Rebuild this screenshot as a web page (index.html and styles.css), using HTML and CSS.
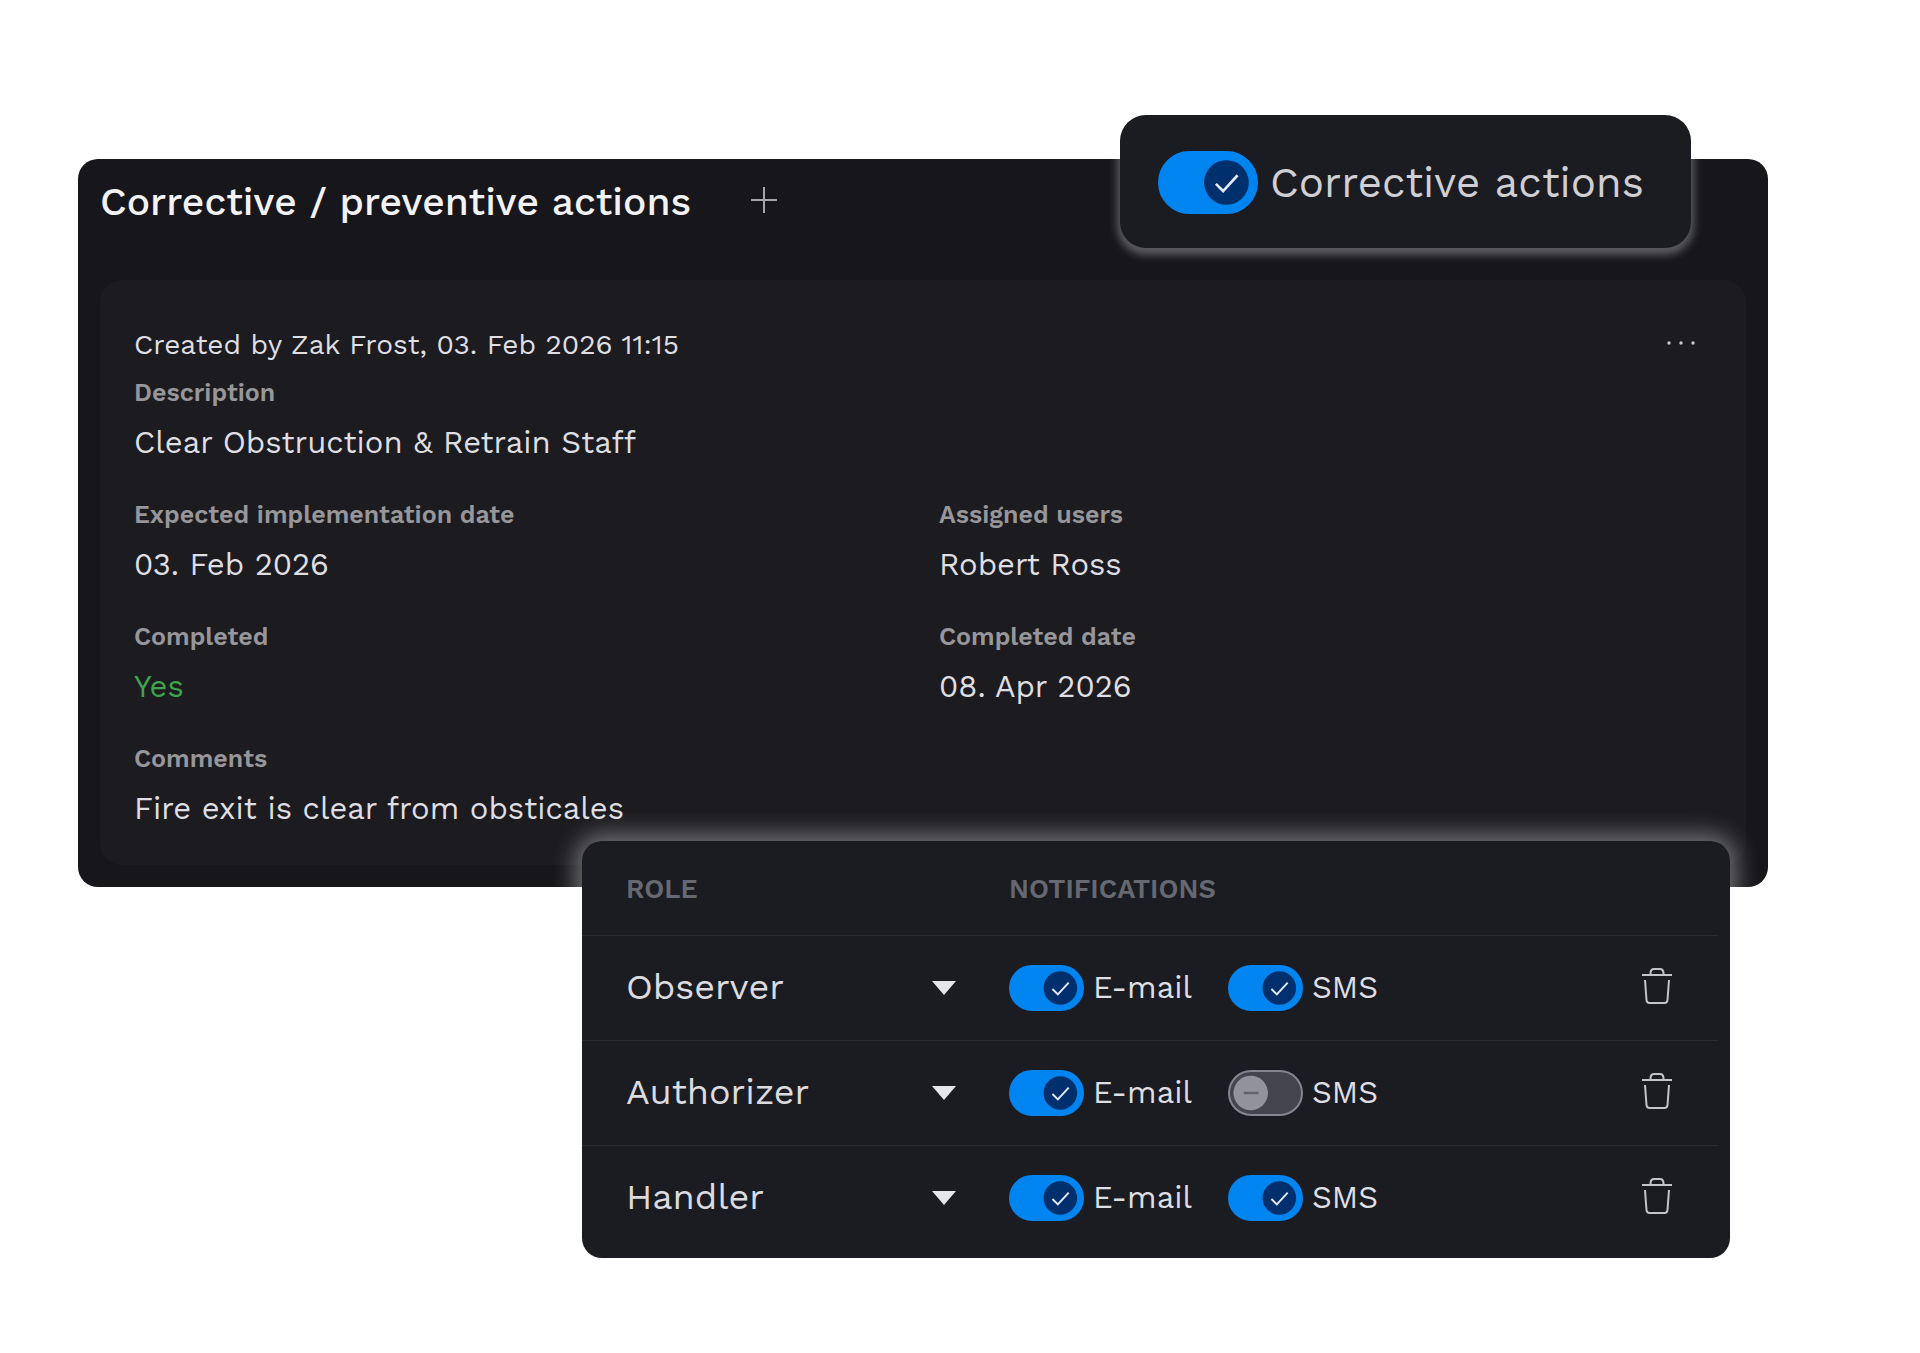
FILE: index.html
```html
<!DOCTYPE html>
<html lang="en">
<head>
  <meta charset="UTF-8">
  <title>Corrective / preventive actions</title>
  <meta name="viewport" content="width=device-width, initial-scale=1">
  <link rel="stylesheet" href="styles.css">
</head>
<body>
  <svg class="sprite" aria-hidden="true">
    <symbol id="thumb-on" viewBox="0 0 76 46">
      <circle cx="52" cy="23" r="17" fill="#002f6d"/>
      <path d="M44 24l5.500 5.500L60.500 17.500" fill="none" stroke="#e3e8f5" stroke-width="2"/>
    </symbol>
    <symbol id="thumb-off" viewBox="0 0 76 46">
      <circle cx="23" cy="23" r="17.500" fill="#92929d"/>
      <path d="M16 23h15" fill="none" stroke="#62626d" stroke-width="2.500"/>
    </symbol>
    <symbol id="caret" viewBox="0 0 24 14">
      <path d="M0 0h24L12 14z" fill="#e6e6ea"/>
    </symbol>
    <symbol id="trash" viewBox="0 0 30 36">
      <path d="M0 7h30M8.500 7V5.500Q8.500 1 12 1h6q3.500 0 3.500 4.500V7M3 12l1.500 20q.3 3 3 3h15q2.700 0 3-3L27 12" fill="none" stroke="#c4c5ca" stroke-width="2"/>
    </symbol>
  </svg>

  <main class="stage">
    <section class="panel">
      <header class="panel-header">
        <h1>Corrective / preventive actions</h1>
        <button class="icon-btn" type="button" aria-label="Add action">
          <svg width="26" height="26" viewBox="0 0 26 26"><path d="M13 0v26M0 13h26" stroke="#a5a5aa" stroke-width="2"/></svg>
        </button>
      </header>

      <article class="card">
        <div class="card-top">
          <p>Created by Zak Frost, 03. Feb 2026 11:15</p>
          <button class="icon-btn" type="button" aria-label="More">
            <svg width="30" height="6" viewBox="0 0 30 6" fill="#c8c8cc"><circle cx="3" cy="3" r="1.700"/><circle cx="15" cy="3" r="1.700"/><circle cx="27" cy="3" r="1.700"/></svg>
          </button>
        </div>
        <dl class="fields">
          <div class="wide"><dt>Description</dt><dd>Clear Obstruction &amp; Retrain Staff</dd></div>
          <div><dt>Expected implementation date</dt><dd>03. Feb 2026</dd></div>
          <div><dt>Assigned users</dt><dd>Robert Ross</dd></div>
          <div><dt>Completed</dt><dd class="yes">Yes</dd></div>
          <div><dt>Completed date</dt><dd>08. Apr 2026</dd></div>
          <div class="wide"><dt>Comments</dt><dd>Fire exit is clear from obsticales</dd></div>
        </dl>
      </article>
    </section>

    <label class="toggle toggle-card">
      <span class="switch switch-lg"><input type="checkbox" checked><svg class="on"><use href="#thumb-on"/></svg><svg class="off"><use href="#thumb-off"/></svg></span>
      Corrective actions
    </label>

    <section class="roles">
      <table>
        <thead>
          <tr><th class="col-role">Role</th><th>Notifications</th><th class="col-delete"></th></tr>
        </thead>
        <tbody>
          <tr>
            <td>
              <span class="select">
                <select aria-label="Role"><option selected>Observer</option><option>Authorizer</option><option>Handler</option></select>
                <svg><use href="#caret"/></svg>
              </span>
            </td>
            <td>
              <div class="toggles">
                <label class="toggle"><span class="switch"><input type="checkbox" checked><svg class="on"><use href="#thumb-on"/></svg><svg class="off"><use href="#thumb-off"/></svg></span>E-mail</label>
                <label class="toggle"><span class="switch"><input type="checkbox" checked><svg class="on"><use href="#thumb-on"/></svg><svg class="off"><use href="#thumb-off"/></svg></span>SMS</label>
              </div>
            </td>
            <td><button class="icon-btn" type="button" aria-label="Delete Observer"><svg width="30" height="36"><use href="#trash"/></svg></button></td>
          </tr>
          <tr>
            <td>
              <span class="select">
                <select aria-label="Role"><option>Observer</option><option selected>Authorizer</option><option>Handler</option></select>
                <svg><use href="#caret"/></svg>
              </span>
            </td>
            <td>
              <div class="toggles">
                <label class="toggle"><span class="switch"><input type="checkbox" checked><svg class="on"><use href="#thumb-on"/></svg><svg class="off"><use href="#thumb-off"/></svg></span>E-mail</label>
                <label class="toggle"><span class="switch"><input type="checkbox"><svg class="on"><use href="#thumb-on"/></svg><svg class="off"><use href="#thumb-off"/></svg></span>SMS</label>
              </div>
            </td>
            <td><button class="icon-btn" type="button" aria-label="Delete Authorizer"><svg width="30" height="36"><use href="#trash"/></svg></button></td>
          </tr>
          <tr>
            <td>
              <span class="select">
                <select aria-label="Role"><option>Observer</option><option>Authorizer</option><option selected>Handler</option></select>
                <svg><use href="#caret"/></svg>
              </span>
            </td>
            <td>
              <div class="toggles">
                <label class="toggle"><span class="switch"><input type="checkbox" checked><svg class="on"><use href="#thumb-on"/></svg><svg class="off"><use href="#thumb-off"/></svg></span>E-mail</label>
                <label class="toggle"><span class="switch"><input type="checkbox" checked><svg class="on"><use href="#thumb-on"/></svg><svg class="off"><use href="#thumb-off"/></svg></span>SMS</label>
              </div>
            </td>
            <td><button class="icon-btn" type="button" aria-label="Delete Handler"><svg width="30" height="36"><use href="#trash"/></svg></button></td>
          </tr>
        </tbody>
      </table>
    </section>
  </main>
</body>
</html>
```
FILE: styles.css
```css
* {
  box-sizing: border-box;
}
body {
  margin: 0;
  background: #fff;
  color: #dfdfe3;
  font-family: "Work Sans", Inter, "Liberation Sans", sans-serif;
  font-size: 31px;
  line-height: 34px;
}
h1, p, dl, dd {
  margin: 0;
}
.sprite {
  display: none;
}
.stage {
  position: relative;
  padding: 159px 152px 0 78px;
}

/* actions panel */
.panel {
  background: #17161b;
  border-radius: 20px;
  padding: 22px;
}
.panel-header {
  display: flex;
  align-items: center;
  gap: 60px;
  height: 42px;
  margin-bottom: 57px;
}
h1 {
  font-size: 39px;
  font-weight: 500;
  line-height: 42px;
  color: #f2f2f5;
}
.icon-btn {
  display: block;
  padding: 0 0 4px;
  border: 0;
  background: none;
  cursor: pointer;
}
.icon-btn svg {
  display: block;
}
.card {
  background: #1c1b20;
  border-radius: 22px;
  padding: 48px 34px 39px;
}
.card-top {
  display: flex;
  justify-content: space-between;
  align-items: center;
  padding-right: 16px;
  margin-bottom: 14px;
  font-size: 28px;
}
.fields {
  display: grid;
  grid-template-columns: 1fr 1fr;
  gap: 38px 32px;
}
.wide {
  grid-column: 1 / -1;
}
dt {
  margin-bottom: 16px;
  font-size: 25px;
  font-weight: 600;
  color: #96969b;
}
.yes {
  color: #3fa34d;
}

/* switches */
.toggle {
  display: flex;
  align-items: center;
  gap: 9px;
  cursor: pointer;
}
.switch {
  display: grid;
  width: 75px;
  height: 46px;
}
.switch > * {
  grid-area: 1 / 1;
  width: 100%;
  height: 100%;
}
.switch input {
  appearance: none;
  margin: 0;
  border: 2px solid #85858f;
  border-radius: 32px;
  background: #44444f;
}
.switch input:checked {
  border-color: #0085f0;
  background: #0085f0;
}
.switch svg {
  pointer-events: none;
}
.switch .on,
.switch input:checked ~ .off {
  display: none;
}
.switch input:checked ~ .on {
  display: block;
}
.switch-lg {
  width: 100px;
  height: 63px;
}
.toggle-card {
  position: absolute;
  top: 115px;
  right: 229px;
  gap: 12px;
  padding: 36px 47px 34px 38px;
  border-radius: 26px;
  background: #1b1c21;
  box-shadow: 0 4px 8px 3px rgba(255, 255, 255, 0.3);
  color: #cfcfd4;
  font-size: 42px;
}

/* roles table */
.roles {
  position: relative;
  margin: -46px 38px 0 504px;
  padding-right: 12px;
  border-radius: 20px;
  background: #1b1c21;
  box-shadow: 0 0 24px 6px rgba(255, 255, 255, 0.4);
}
table {
  width: 100%;
  table-layout: fixed;
  border-collapse: collapse;
}
th, td {
  height: 105px;
  padding: 0;
  text-align: left;
  vertical-align: middle;
}
th {
  height: 94px;
  padding-top: 2px;
  font-size: 27px;
  font-weight: 600;
  text-transform: uppercase;
  color: #666872;
}
tbody tr {
  border-top: 1px solid #2b2c32;
}
.col-role {
  width: 427px;
}
th:first-child,
td:first-child {
  padding-left: 44px;
}
.col-delete {
  width: 76px;
}
tbody tr:last-child td {
  padding-bottom: 8px;
  height: 113px;
}
.select {
  display: grid;
  align-items: center;
  width: 330px;
}
.select > * {
  grid-area: 1 / 1;
}
.select svg {
  justify-self: end;
  width: 24px;
  height: 14px;
  pointer-events: none;
}
select {
  appearance: none;
  width: 100%;
  padding: 0 0 2px;
  border: 0;
  background: none;
  color: #dcdce0;
  font: inherit;
  font-size: 36px;
  line-height: 40px;
}
.toggles {
  display: flex;
  gap: 36px;
}
```
